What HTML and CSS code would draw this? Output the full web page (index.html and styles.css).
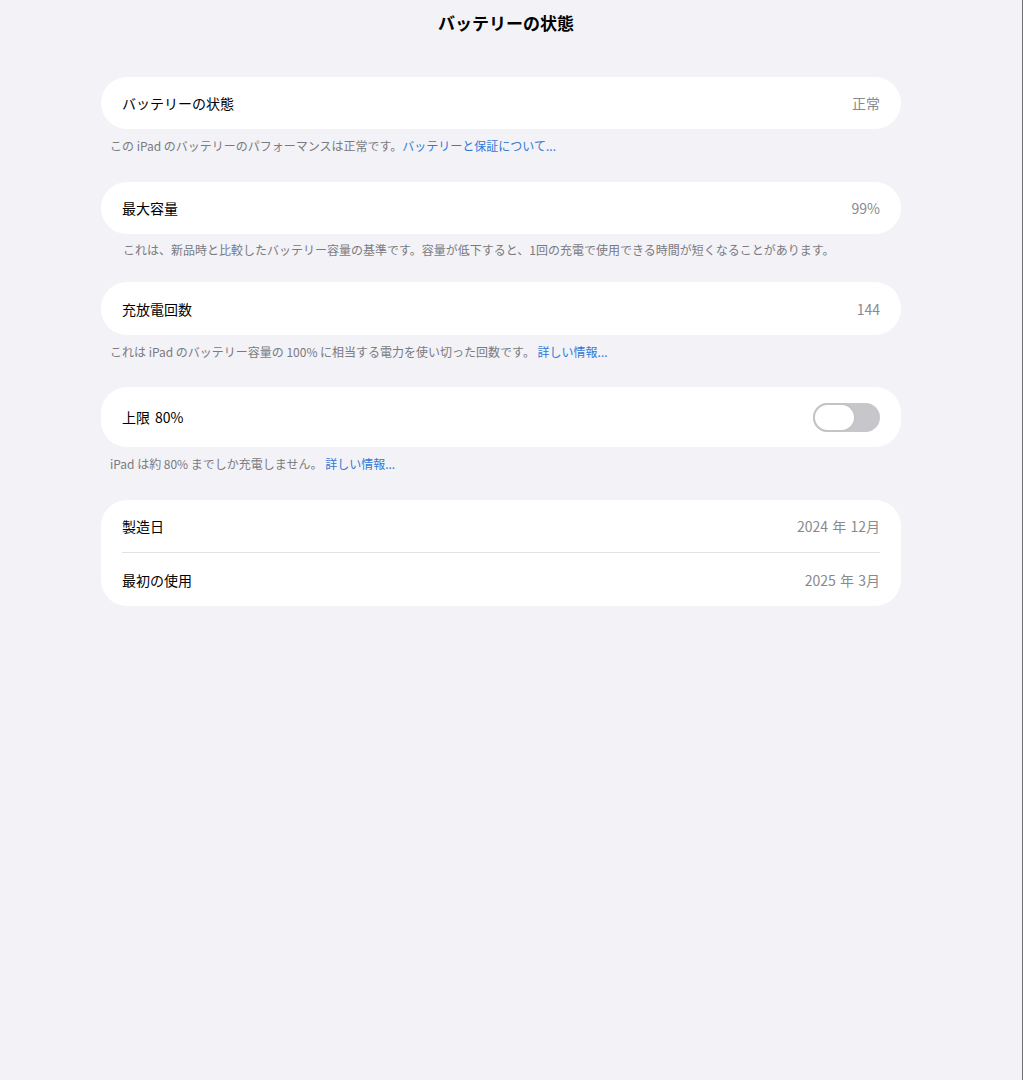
FILE: index.html
```html
<!DOCTYPE html>
<html lang="ja">
<head>
<meta charset="utf-8">
<title>バッテリーの状態</title>
<link rel="stylesheet" href="styles.css">
</head>
<body>
<div class="page">
  <header class="nav">
    <h1 class="nav-title">バッテリーの状態</h1>
  </header>
  <main class="content">
    <section class="group group-1">
      <div class="card">
        <div class="row">
          <span class="label">バッテリーの状態</span>
          <span class="value">正常</span>
        </div>
      </div>
      <p class="note">この<span class="lat">iPad</span>のバッテリーのパフォーマンスは正常です。<a class="link" href="#">バッテリーと保証について...</a></p>
    </section>

    <section class="group group-2">
      <div class="card">
        <div class="row">
          <span class="label">最大容量</span>
          <span class="value">99%</span>
        </div>
      </div>
      <p class="note note-indent">これは、新品時と比較したバッテリー容量の基準です。容量が低下すると、1回の充電で使用できる時間が短くなることがあります。</p>
    </section>

    <section class="group group-3">
      <div class="card">
        <div class="row row-tall">
          <span class="label">充放電回数</span>
          <span class="value">144</span>
        </div>
      </div>
      <p class="note">これは<span class="lat">iPad</span>のバッテリー容量の<span class="lat">100%</span>に相当する電力を使い切った回数です。 <a class="link" href="#">詳しい情報...</a></p>
    </section>

    <section class="group group-4">
      <div class="card">
        <div class="row row-toggle">
          <span class="label">上限<span class="lat-l">80%</span></span>
          <span class="switch"><span class="knob"></span></span>
        </div>
      </div>
      <p class="note"><span class="lat-r">iPad</span>は約<span class="lat">80%</span>までしか充電しません。 <a class="link" href="#">詳しい情報...</a></p>
    </section>

    <section class="group">
      <div class="card">
        <div class="row">
          <span class="label">製造日</span>
          <span class="value">2024<span class="yr">年</span>12月</span>
        </div>
        <div class="separator"></div>
        <div class="row row-tall">
          <span class="label">最初の使用</span>
          <span class="value">2025<span class="yr">年</span>3月</span>
        </div>
      </div>
    </section>
  </main>
</div>
</body>
</html>
```

FILE: styles.css
```css
* {
  box-sizing: border-box;
}

html, body {
  margin: 0;
  padding: 0;
  background: #f2f2f7;
}

body {
  font-family: "Noto Sans CJK JP", "Noto Sans", sans-serif;
  color: #000;
}

.page {
  min-height: 100vh;
  border-right: 1px solid #6e6e73;
  background: #f2f2f7;
}

.nav {
  padding: 11px 10px 0 0;
  text-align: center;
}

.nav-title {
  margin: 0;
  font-size: 17px;
  line-height: 24px;
  font-weight: 700;
  color: #000;
}

.content {
  width: 800px;
  margin-left: 101px;
  padding-top: 42px;
}

.group-1 {
  margin-bottom: 27px;
}

.group-2 {
  margin-bottom: 23px;
}

.group-3 {
  margin-bottom: 26px;
}

.group-4 {
  margin-bottom: 27px;
}

.card {
  background: #fff;
  border-radius: 26px;
  overflow: hidden;
}

.row {
  display: flex;
  align-items: center;
  justify-content: space-between;
  height: 52px;
  padding: 0 21px;
}

.row-tall {
  height: 53px;
}

.row-toggle {
  height: 60px;
}

.label {
  font-size: 14px;
  line-height: 20px;
  color: #000;
}

.value {
  font-size: 14px;
  line-height: 20px;
  color: #8a8a8e;
}

.yr {
  margin: 0 0.3em;
}

.lat {
  margin: 0 0.22em;
}

.lat-l {
  margin-left: 0.35em;
}

.lat-r {
  margin-right: 0.22em;
}

.separator {
  height: 1px;
  margin: 0 21px;
  background: #e1e1e6;
}

.note {
  margin: 8px 0 0;
  padding-left: 9px;
  font-size: 12px;
  line-height: 18px;
  color: #7a7a7f;
}

.note-indent {
  margin-top: 7px;
  padding-left: 22px;
}

.link {
  color: #3478d8;
  text-decoration: none;
}

.switch {
  position: relative;
  display: block;
  width: 67px;
  height: 29px;
  border-radius: 15px;
  background: #c7c7cb;
}

.knob {
  position: absolute;
  left: 0;
  top: 0;
  width: 43px;
  height: 29px;
  border-radius: 15px;
  background: #fff;
  border: 2px solid #c4c4c8;
}
```
